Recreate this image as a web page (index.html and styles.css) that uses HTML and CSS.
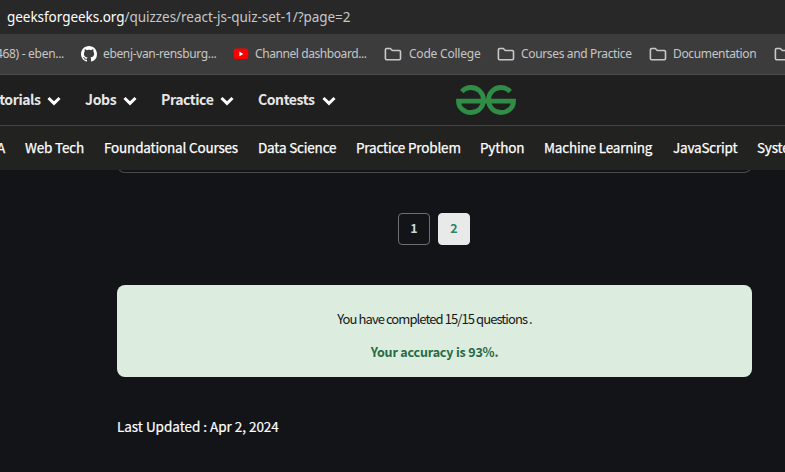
FILE: index.html
```html
<!DOCTYPE html>
<html lang="en">
<head>
<meta charset="utf-8">
<title>React JS Quiz Set 1</title>
<link rel="stylesheet" href="styles.css">
</head>
<body>
<svg width="0" height="0" class="defs">
  <symbol id="folder" viewBox="0 0 18 14"><path d="M2.6 1.5h3.7l2 2h7c.7 0 1.2.5 1.2 1.2v6.8c0 .7-.5 1.2-1.2 1.2H2.600c-.7 0-1.2-.5-1.2-1.2V2.7c0-.7.5-1.2 1.2-1.2z" fill="none" stroke="#c9c9c9" stroke-width="1.6"/></symbol>
  <symbol id="chev" viewBox="0 0 14 10"><path d="M1.5 2 7 7.3 12.5 2" fill="none" stroke="#fff" stroke-width="3"/></symbol>
</svg>
<div class="address"><span class="host">geeksforgeeks.org</span><span class="path">/quizzes/react-js-quiz-set-1/?page=2</span></div>
<div class="bookmarks">
  <span class="bm first">468) - eben...</span>
  <span class="bm github"><svg width="16" height="16" viewBox="0 0 16 16"><path fill="#fff" d="M8 0C3.58 0 0 3.58 0 8c0 3.54 2.29 6.53 5.47 7.59.4.07.55-.17.55-.38 0-.19-.01-.82-.01-1.49-2.01.37-2.53-.49-2.69-.94-.09-.23-.48-.94-.82-1.13-.28-.15-.68-.52-.01-.53.63-.01 1.08.58 1.23.82.72 1.21 1.87.87 2.33.66.07-.52.28-.87.51-1.07-1.78-.2-3.64-.89-3.64-3.95 0-.87.31-1.59.82-2.15-.08-.2-.36-1.02.08-2.12 0 0 .67-.21 2.2.82.64-.18 1.32-.27 2-.27s1.36.09 2 .27c1.53-1.04 2.2-.82 2.2-.82.44 1.1.16 1.92.08 2.12.51.56.82 1.27.82 2.15 0 3.07-1.87 3.75-3.65 3.95.29.25.54.73.54 1.48 0 1.07-.01 1.93-.01 2.2 0 .21.15.46.55.38A8.01 8.01 0 0 0 16 8c0-4.42-3.58-8-8-8z"/></svg>ebenj-van-rensburg...</span>
  <span class="bm youtube"><svg width="16" height="12" viewBox="0 0 16 12"><rect x=".7" y=".5" width="14.6" height="10.6" rx="2.4" fill="#f00"/><path d="M6.4 3.6v4.6L10.3 5.9z" fill="#fff"/></svg>Channel dashboard...</span>
  <span class="bm code"><svg width="18" height="14"><use href="#folder"/></svg>Code College</span>
  <span class="bm courses"><svg width="18" height="14"><use href="#folder"/></svg>Courses and Practice</span>
  <span class="bm docs"><svg width="18" height="14"><use href="#folder"/></svg>Documentation</span>
  <span class="bm"><svg width="18" height="14"><use href="#folder"/></svg></span>
</div>
<header class="nav">
  <span class="menu tutorials">Tutorials<svg width="14" height="10"><use href="#chev"/></svg></span>
  <span class="menu jobs">Jobs<svg width="14" height="10"><use href="#chev"/></svg></span>
  <span class="menu practice">Practice<svg width="14" height="10"><use href="#chev"/></svg></span>
  <span class="menu contests">Contests<svg width="14" height="10"><use href="#chev"/></svg></span>
  <svg class="logo" width="60" height="30" viewBox="0 0 60 30"><g fill="none" stroke="#2f8d46" stroke-width="4.8"><path d="M5.8 6.6C8.2 4 11.4 2.5 15 2.5c7 0 12.5 5.5 12.5 12.5S22 27.5 15 27.5 2.5 22.5 2.5 16.2H30"/><path d="M54.2 6.6C51.8 4 48.6 2.5 45 2.5c-7 0-12.5 5.5-12.5 12.5S38 27.5 45 27.5s12.5-5 12.5-11.3H30"/></g></svg>
</header>
<nav class="topics">
  <span class="ga">Q&amp;A</span><span class="web">Web Tech</span><span class="found">Foundational Courses</span><span class="data">Data Science</span><span class="prob">Practice Problem</span><span class="py">Python</span><span class="ml">Machine Learning</span><span class="js">JavaScript</span><span class="sys">System Design</span>
</nav>
<main>
  <div class="card-end"></div>
  <div class="pages"><span class="page">1</span><span class="page current">2</span></div>
  <section class="result"><p class="done">You have completed 15/15 questions .</p><p class="accuracy">Your accuracy is 93%.</p></section>
  <p class="updated">Last Updated : Apr 2, 2024</p>
</main>
</body>
</html>
```
FILE: styles.css
```css
* { box-sizing: border-box; }
body { margin: 0; width: 785px; height: 472px; overflow: hidden; background: #131418; color: #fff; font-family: "Noto Sans CJK SC", "Noto Sans", sans-serif; }
p { margin: 0; }
.defs { position: absolute; }
.address { height: 34px; padding-left: 7px; background: #282828; font: 13.5px/34px "Noto Sans", sans-serif; letter-spacing: -.04px; white-space: nowrap; }
.host { color: #fff; }
.path { color: #c7c7c7; }
.bookmarks { display: flex; align-items: center; height: 41px; background: #3c3c3c; border-bottom: 1px solid #4b4b4b; color: #c7c7c7; font: 12px/40px "Noto Sans", sans-serif; letter-spacing: -.35px; white-space: nowrap; overflow: hidden; }
.bm { display: flex; align-items: center; flex: none; gap: 6px; }
.first { width: 81px; justify-content: flex-end; padding-right: 17px; letter-spacing: -.3px; }
.github { width: 152px; }
.youtube { width: 151px; letter-spacing: -.42px; }
.code { width: 113px; gap: 7px; letter-spacing: -.22px; }
.courses { width: 152px; }
.docs { width: 125px; }
.nav { display: flex; align-items: center; height: 50px; background: #1f1f1f; overflow: hidden; }
.menu { display: flex; align-items: center; justify-content: space-between; flex: none; font-size: 14px; font-weight: 700; line-height: 46px; letter-spacing: -.42px; color: #e6e6e6; white-space: nowrap; height: 46px; padding-bottom: 2px; }
.menu svg { margin-top: 4px; }
.tutorials { width: 78px; margin-left: -17px; }
.jobs { width: 52px; margin-left: 24px; letter-spacing: -.3px; }
.practice { width: 73px; margin-left: 24px; }
.contests { width: 78px; margin-left: 24px; }
.logo { margin-left: 120px; }
.topics { display: flex; gap: 20px; height: 45px; background: #222220; border-top: 1px solid #444; font-size: 13.5px; line-height: 43px; letter-spacing: -.18px; white-space: nowrap; overflow: hidden; position: relative; z-index: 1; }
.topics span { flex: none; -webkit-text-stroke: .25px #fff; }
.ga { width: 29px; margin-left: -24px; text-align: right; }
.web { width: 59px; }
.found { width: 134px; }
.data { width: 78px; }
.prob { width: 104px; }
.py { width: 44px; }
.ml { width: 109px; }
.js { width: 64px; }
main { width: 635px; margin-left: 117px; }
.card-end { height: 13px; margin-top: -10px; border: 1px solid #4b4c50; border-top: 0; border-radius: 0 0 8px 8px; }
.pages { display: flex; justify-content: center; gap: 8px; margin-top: 40px; padding-right: 2px; }
.page { width: 32px; height: 32px; padding-left: 1px; border: 1px solid #6e6f73; border-radius: 4px; font-size: 12.5px; font-weight: 700; line-height: 28px; text-align: center; color: #ccd5dc; }
.current { background: #e9e9e9; border-color: #e9e9e9; color: #2a8467; }
.result { height: 92px; margin-top: 40px; padding-top: 24px; border-radius: 8px; background: #dcecdf; text-align: center; }
.done { font-size: 13px; line-height: 20px; letter-spacing: -.92px; color: #16181a; }
.accuracy { margin-top: 13px; font-size: 12.5px; font-weight: 700; line-height: 20px; letter-spacing: -.18px; color: #276a42; }
.updated { margin-top: 39px; font-size: 13.5px; line-height: 20px; letter-spacing: -.03px; -webkit-text-stroke: .2px #fff; }
```
